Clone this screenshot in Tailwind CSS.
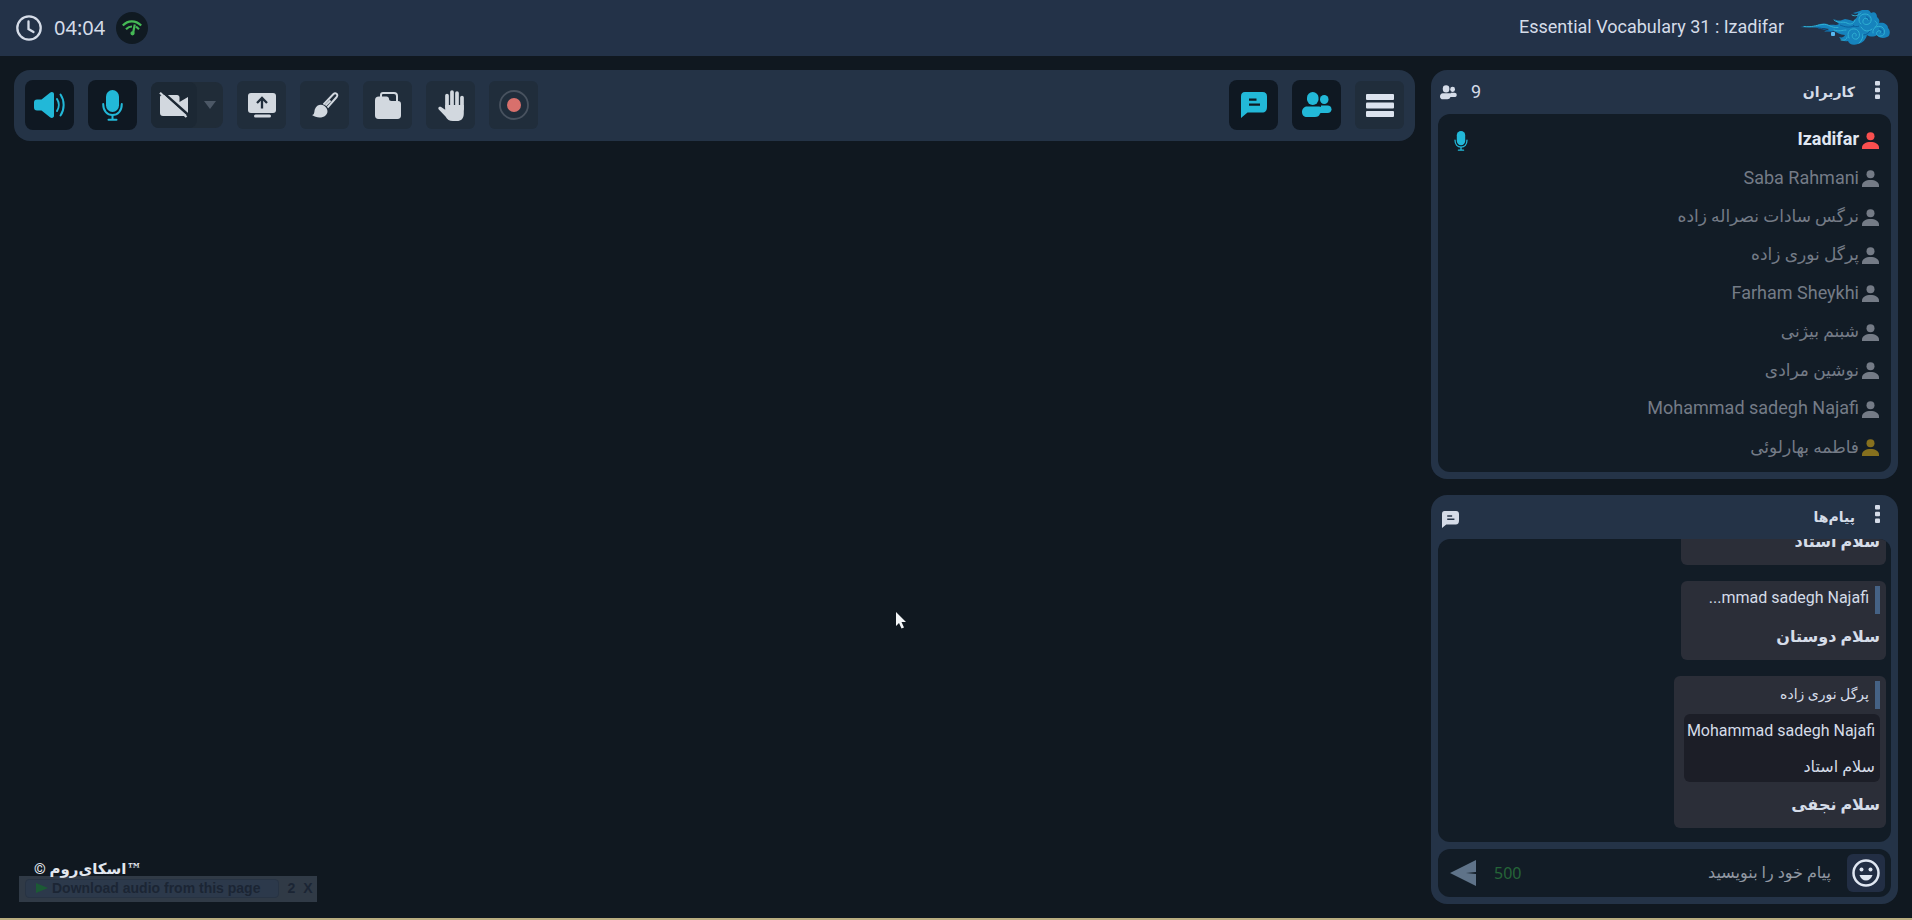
<!DOCTYPE html>
<html lang="fa">
<head>
<meta charset="utf-8">
<title>Essential Vocabulary 31 : Izadifar</title>
<script src="https://cdn.jsdelivr.net/npm/@tailwindcss/browser@4"></script>
</head>
<body class="relative flex h-screen flex-col overflow-hidden bg-[#101820] font-['Roboto','DejaVu_Sans',sans-serif] text-[#d5dce8]">
<svg class="hidden" aria-hidden="true">
  <symbol id="person" viewBox="0 0 17 17"><circle cx="8.5" cy="4.2" r="4"/><path d="M0 17v-1.5C0 12 4 10 8.500 10S17 12 17 15.500V17z"/></symbol>
  <symbol id="people" viewBox="0 0 30 26"><rect x="5" y="0" width="11.500" height="13" rx="5.700"/><rect x="18" y="3" width="8.500" height="9" rx="4.200"/><path d="M5 14.500h12c2 0 3 .8 3.500 2.500.4 2-.5 4-2.500 4.500-.5 2.500-2.500 3.500-5 3.500H5c-3 0-5-2-5-5s2-5.500 5-5.500z"/><path d="M19 13.500h6.500c2.500 0 4 1.500 4 3.800s-1.500 3.700-4 3.700H19z"/></symbol>
  <symbol id="mic" viewBox="0 0 21 31"><rect x="4" y="0" width="13" height="22" rx="6.500"/><path d="M1.200 14c0 7 4 11 9.300 11s9.300-4 9.300-11" fill="none" stroke="currentColor" stroke-width="2" stroke-linecap="round"/><path d="M10.500 25v4.500M6.500 29.800h8" stroke="currentColor" stroke-width="2" stroke-linecap="round"/></symbol>
  <symbol id="chat" viewBox="0 0 26 26"><path fill-rule="evenodd" d="M4 0h17.500C24.500 0 26 1.500 26 4.500v10c0 4-1.500 6-5 6H6.500L0 26V4.500C0 1.500 1.200 0 4 0zM8 6.500v2.200h7.500V6.500zM8 11.500v2.200h11v-2.200z"/></symbol>
</svg>

<header class="flex h-14 shrink-0 items-center justify-between bg-[#233248] pr-[22px] pl-4">
  <div class="flex items-center">
    <svg class="size-[26px]" viewBox="0 0 26 26" fill="none" stroke="currentColor" stroke-width="2.300" stroke-linecap="round"><circle cx="13" cy="13" r="11.700"/><path d="M12.500 6.500v7.500l5 3"/></svg>
    <time class="ml-3 font-['Noto_Sans'] text-xl">04:04</time>
    <span class="ml-[11px] grid size-8 place-items-center rounded-full bg-[#101a22]">
      <svg class="h-4 w-5" viewBox="0 0 20 16" fill="none" stroke="#45b955" stroke-width="2.200"><path d="M.8 5.500C6 0 13.500 0 19.200 5.500"/><path d="M4 9.200c2-2 4-2.700 6-2.700M14 6.500l3 2.700"/><path d="M12.800 4.500 11 13.500"/><circle cx="10.500" cy="13.300" r="1" fill="#45b955"/></svg>
    </span>
  </div>
  <div class="flex items-center gap-4">
    <h1 class="pb-0.5 text-lg">Essential Vocabulary 31 : Izadifar</h1>
    <svg class="h-9 w-[90px]" viewBox="0 0 90 36">
      <path fill="#1683bd" d="M0 17c6-1 11 0 16-1 5-3 9-3 13-1 4-1 7 1 10-1l-5-5c5 3 8 1 11 0 4 1 6 1 8 2 3-2 5-5 5-8-2 1-3 1-5 0 4-1 7-2 9-3 3-1 7-1 9 3 3-2 6 0 6 4 2 2 3 3 2 6 4-1 9 1 9 5 3 3 2 8-1 9-4 2-8 1-10-2-3 2-7 2-10 0-1 4-4 8-9 9-5 2-9 0-10-3-4 1-7-1-9-4 3 1 5 0 6-2-5 0-8-3-12-4-3 1-6 0-9 1l5-3C21 17 10 18 0 17z"/>
      <g fill="none" stroke="#2fb0d3" stroke-width="1" stroke-linecap="round"><path d="M4 16.500c8 1 11-1 18-2 7-1 9 4 16 3M34 10c4 4 9 1 13 3 3 2 7 1 8-3M52 5c3 2 7 0 9-2M61 14c-4-3-2-10 4-10 5 0 8 5 5 9-3 3-8 1-7-2 0-3 4-4 5-1M73 23c-1-5 4-8 9-6 4 3 3 9-1 9-4 1-6-3-3-5 2-1 4 1 2 2M49 28c-3-5 1-10 6-9 5 1 6 8 2 10-4 1-6-3-4-5 2-2 4 0 3 2M41 30c4 1 6-1 6-3M61 17c3 5 8 5 11 2M34 20c5 2 8 0 12 0M59 33c3-2 4-6 4-9M75 11c3 2 3 4 0 6"/></g>
      <g fill="none" stroke="#0b5f9d" stroke-width="1"><path d="M18 18c7 1 9 3 15 4M40 15c5 2 9 3 14 1M63 25c3 0 6-2 7-4M59 16c-2 1-5 1-6-1M66 7c2 0 3 1 3 3M79 19c3 0 4 2 3 4"/></g>
      <rect x="31" y="22" width="4" height="4" rx="1" fill="#58b9f0"/>
    </svg>
  </div>
</header>

<main class="flex min-h-0 flex-1 gap-4 px-3.5 pt-3.5 pb-4">
  <section class="relative min-w-0 flex-1">
    <nav class="flex h-[71px] items-center justify-between rounded-2xl bg-[#243346] px-[11px] pb-px" aria-label="ابزارها">
      <div class="flex items-center gap-3.5">
        <button type="button" aria-label="صدا" class="grid h-[50px] w-[49px] place-items-center rounded-lg bg-[#0f1822] text-[#22b8d8]">
          <svg class="h-[26px] w-[31px]" viewBox="0 0 31 26" fill="currentColor"><path d="M3 7.500h4.500L16 .8c1.800-1.400 4-.5 4 1.500v21.400c0 2-2.200 2.900-4 1.500L7.500 18.500H3c-2 0-3-1.200-3-3v-5c0-1.800 1-3 3-3z"/><path d="M23 7c2.300 3.500 2.300 8.500 0 12M26.500 2.500c4.200 6 4.200 15 0 21" fill="none" stroke="currentColor" stroke-width="2" stroke-linecap="round"/></svg>
        </button>
        <button type="button" aria-label="میکروفن" class="grid h-[50px] w-[49px] place-items-center rounded-lg bg-[#0f1822] text-[#22b8d8]"><svg class="h-[31px] w-[21px]" fill="currentColor"><use href="#mic"/></svg></button>
        <div class="flex h-[46px] w-[72px] rounded-lg bg-[#202c38]">
          <button type="button" aria-label="دوربین" class="grid w-[46px] place-items-center rounded-lg bg-[#1c2834] text-[#d2d8df]">
            <svg class="h-[26px] w-[30px]" viewBox="0 0 30 26"><path fill="currentColor" d="M4 3h14c1.500 0 2.500 1 2.500 2.500V10L29 5v17.500L25 24H4c-2 0-3-1-3-3V5c0-1.200 1-2 3-2z"/><path d="M2.500 -1 30 23.500" stroke="#1c2834" stroke-width="2.500"/><path d="M1 .8 27.500 25" stroke="currentColor" stroke-width="2.200"/></svg>
          </button>
          <button type="button" aria-label="گزینه‌های دوربین" class="grid flex-1 place-items-center"><svg class="h-2 w-3" viewBox="0 0 12 8"><path fill="#4c5866" d="M0 0h12L6 8z"/></svg></button>
        </div>
        <button type="button" aria-label="اشتراک صفحه" class="grid h-12 w-[49px] place-items-center rounded-md bg-[#202d3b] text-[#d2d8df]"><svg class="h-[25px] w-7" viewBox="0 0 28 25"><rect width="28" height="20" rx="3" fill="currentColor"/><rect x="6" y="21.500" width="17" height="3" rx="1.500" fill="currentColor"/><path d="M14 15.500V5.500M9 10l5-5 5 5" fill="none" stroke="#202d3b" stroke-width="2.300"/></svg></button>
        <button type="button" aria-label="تخته" class="grid h-12 w-[49px] place-items-center rounded-md bg-[#202d3b] text-[#d2d8df]"><svg class="h-[26px] w-7" viewBox="0 0 28 26"><path fill="currentColor" d="M1 23c3-.5 2-4 3-6 1.500-4 6-5.500 9.500-3 3.500 2.500 4 7 1 9.500C11 26.500 5 26 1 23z"/><path d="M12.500 12.500 22.500 2c2-2 5 .5 3.200 3L16.500 15.500" fill="none" stroke="currentColor" stroke-width="1.900" stroke-linejoin="round"/><path d="m14.500 13.500 5-5" stroke="currentColor" stroke-width="2"/></svg></button>
        <button type="button" aria-label="فایل‌ها" class="grid h-12 w-[49px] place-items-center rounded-md bg-[#202d3b] text-[#d2d8df]"><svg class="h-[27px] w-[26px]" viewBox="0 0 26 27"><path fill="currentColor" d="M0 8.500C0 6 1.200 4.500 4 4.500h7.500c1.500 0 2.500 1 2.500 2.300C14 8.300 15 9 16.500 9H23c2 0 3 1 3 3v11.500c0 2.300-1.200 3.500-3.500 3.500h-19C1.200 27 0 25.800 0 23.500z"/><path d="M6 5V3c0-1.300.7-2 2-2h11c1.800 0 3 1 3 3v6" fill="none" stroke="currentColor" stroke-width="2"/></svg></button>
        <button type="button" aria-label="بلند کردن دست" class="grid h-12 w-[49px] place-items-center rounded-md bg-[#202d3b] text-[#d2d8df]"><svg class="h-[31px] w-[26px]" viewBox="0 0 26 31"><g stroke="currentColor" stroke-linecap="round" stroke-width="3.700"><path d="M9 17V5.500M14 17V2M19 17V3M24 19V7.500"/></g><path fill="currentColor" d="M7.200 15h18.600v8.500c0 5-2.500 7.500-7 7.500h-4c-3.500 0-5.500-1.500-7.300-4.500L.8 19.500c-1.500-2.300.9-3.500 2.700-2.300l3.700 2.500z"/></svg></button>
        <button type="button" aria-label="ضبط" class="grid h-12 w-[49px] place-items-center rounded-md bg-[#202d3b]"><svg class="size-[30px]" viewBox="0 0 30 30"><circle cx="15" cy="15" r="14" fill="none" stroke="#48525f" stroke-width="1.800"/><circle cx="15" cy="15" r="7" fill="#d8706c"/></svg></button>
      </div>
      <div class="flex items-center gap-3.5">
        <button type="button" aria-label="پیام‌ها" class="grid h-[50px] w-[49px] place-items-center rounded-lg bg-[#0f1822] text-[#22b8d8]"><svg class="size-[26px]" fill="currentColor"><use href="#chat"/></svg></button>
        <button type="button" aria-label="کاربران" class="grid h-[50px] w-[49px] place-items-center rounded-lg bg-[#0f1822] text-[#22b8d8]"><svg class="h-[26px] w-[30px]" fill="currentColor"><use href="#people"/></svg></button>
        <button type="button" aria-label="فهرست" class="grid h-12 w-[49px] place-items-center rounded-md bg-[#202d3b] text-[#dce3ee]"><svg class="h-[23px] w-7" viewBox="0 0 28 23" fill="currentColor"><rect width="28" height="6" rx="1"/><rect y="8.500" width="28" height="6" rx="1"/><rect y="17" width="28" height="6" rx="1"/></svg></button>
      </div>
    </nav>
  </section>

  <aside dir="rtl" class="flex w-[467px] shrink-0 flex-col gap-4">
    <section class="flex h-[409px] shrink-0 flex-col rounded-2xl bg-[#243347] px-[7px] pb-[7px]">
      <div class="flex h-11 shrink-0 items-center pr-[11px] pl-0.5">
        <button type="button" aria-label="گزینه‌های کاربران" class="mb-1"><svg class="h-[18px] w-[5px]" viewBox="0 0 5 18" fill="currentColor"><rect width="5" height="4.500" rx="1"/><rect y="6.700" width="5" height="4.500" rx="1"/><rect y="13.500" width="5" height="4.500" rx="1"/></svg></button>
        <h2 class="mr-5 text-sm font-bold">کاربران</h2>
        <span class="mr-auto text-lg">9</span>
        <svg class="mr-3.5 h-[15px] w-[17px]" fill="currentColor"><use href="#people"/></svg>
      </div>
      <ul class="flex flex-1 flex-col rounded-xl bg-[#121c26] pt-1.5 pr-3 pb-1.5 pl-4 text-lg text-[#747b86]">
        <li class="flex flex-1 items-center gap-[3px] text-[#e0e7f2]"><svg class="mt-0.5 size-[17px] text-[#f94f4f]" fill="currentColor"><use href="#person"/></svg><span class="font-bold">Izadifar</span><svg class="mt-1 mr-auto h-5 w-3.5 text-[#22b8d8]" fill="currentColor"><use href="#mic"/></svg></li>
        <li class="flex flex-1 items-center gap-[3px]"><svg class="mt-0.5 size-[17px]" fill="currentColor"><use href="#person"/></svg><span>Saba Rahmani</span></li>
        <li class="flex flex-1 items-center gap-[3px]"><svg class="mt-0.5 size-[17px]" fill="currentColor"><use href="#person"/></svg><span class="text-[17px]">نرگس سادات نصراله زاده</span></li>
        <li class="flex flex-1 items-center gap-[3px]"><svg class="mt-0.5 size-[17px]" fill="currentColor"><use href="#person"/></svg><span class="text-[17px]">پرگل نوری زاده</span></li>
        <li class="flex flex-1 items-center gap-[3px]"><svg class="mt-0.5 size-[17px]" fill="currentColor"><use href="#person"/></svg><span>Farham Sheykhi</span></li>
        <li class="flex flex-1 items-center gap-[3px]"><svg class="mt-0.5 size-[17px]" fill="currentColor"><use href="#person"/></svg><span class="text-[17px]">شبنم بیژنی</span></li>
        <li class="flex flex-1 items-center gap-[3px]"><svg class="mt-0.5 size-[17px]" fill="currentColor"><use href="#person"/></svg><span class="text-[17px]">نوشین مرادی</span></li>
        <li class="flex flex-1 items-center gap-[3px]"><svg class="mt-0.5 size-[17px]" fill="currentColor"><use href="#person"/></svg><span>Mohammad sadegh Najafi</span></li>
        <li class="flex flex-1 items-center gap-[3px]"><svg class="mt-0.5 size-[17px] text-[#86701e]" fill="currentColor"><use href="#person"/></svg><span class="text-[17px]">فاطمه بهارلوئی</span></li>
      </ul>
    </section>

    <section class="flex min-h-0 flex-1 flex-col rounded-2xl bg-[#243347] px-[7px] pb-[7px]">
      <div class="flex h-11 shrink-0 items-center pr-[11px] pl-1">
        <button type="button" aria-label="گزینه‌های پیام‌ها" class="mb-1.5"><svg class="h-[18px] w-[5px]" viewBox="0 0 5 18" fill="currentColor"><rect width="5" height="4.500" rx="1"/><rect y="6.700" width="5" height="4.500" rx="1"/><rect y="13.500" width="5" height="4.500" rx="1"/></svg></button>
        <h2 class="mr-5 text-sm font-bold">پیام‌ها</h2>
        <svg class="mt-1 mr-auto size-[17px]" fill="currentColor"><use href="#chat"/></svg>
      </div>
      <div class="flex min-h-0 flex-1 flex-col items-start justify-end gap-4 overflow-hidden rounded-xl bg-[#121c26] pr-[5px] pb-3.5">
        <article class="w-[205px] shrink-0 rounded-md bg-[#2b2e38] px-1.5 pb-1.5">
          <p class="flex h-10 items-center pt-1.5 text-base font-bold">سلام استاد</p>
        </article>
        <article class="w-[205px] shrink-0 rounded-md bg-[#2b2e38] px-1.5 pt-[5px] pb-1.5">
          <p class="flex h-7 items-center border-r-[5px] border-[#456285] pr-1.5 pb-1 text-base"><span dir="ltr">...mmad sadegh Najafi</span></p>
          <p class="flex h-10 items-center pt-1.5 text-base font-bold">سلام دوستان</p>
        </article>
        <article class="w-[212px] shrink-0 rounded-md bg-[#2b2e38] px-1.5 pt-[5px] pb-1.5">
          <p class="flex h-7 items-center border-r-[5px] border-[#456285] pr-1.5 pb-0.5 text-sm">پرگل نوری زاده</p>
          <blockquote class="mt-[5px] ml-1 rounded-md bg-[#1c1e27] pr-[5px]">
            <p class="flex h-[34px] items-center whitespace-nowrap text-base">Mohammad sadegh Najafi</p>
            <p class="flex h-[34px] items-center pt-1 text-base">سلام استاد</p>
          </blockquote>
          <p class="flex h-10 items-center pt-1.5 text-base font-bold">سلام نجفی</p>
        </article>
      </div>
      <form class="mt-[7px] flex h-12 shrink-0 items-center rounded-xl bg-[#121c26] pr-1.5 pl-3">
        <button type="button" aria-label="شکلک" class="grid size-[38px] shrink-0 place-items-center rounded-md bg-[#222e44] text-[#e0e7f2]"><svg class="size-7" viewBox="0 0 28 28"><circle cx="14" cy="14" r="12.500" fill="none" stroke="currentColor" stroke-width="2.500"/><g fill="currentColor"><circle cx="9.500" cy="10.500" r="2"/><circle cx="18.500" cy="10.500" r="2"/><path d="M7.500 16h13c-1 3.500-3.500 5.500-6.500 5.500S8.500 19.500 7.500 16z"/></g></svg></button>
        <input type="text" aria-label="پیام" placeholder="پیام خود را بنویسید" class="mr-4 min-w-0 flex-1 bg-transparent text-base outline-none placeholder:text-[#9198a2]">
        <span class="font-['Noto_Sans'] text-base text-[#256438]">500</span>
        <button type="button" aria-label="ارسال" class="mr-[18px]"><svg class="h-[26px] w-[26px]" viewBox="0 0 26 26"><path fill="#5f7389" d="M0 13 26 0v12l-10 1 10 1v12z"/></svg></button>
      </form>
    </section>
  </aside>
</main>

<div class="absolute bottom-[18px] left-[19px] flex h-[26px] items-center gap-2 bg-[#303a46] pr-1 pb-0.5 pl-1.5 font-['Liberation_Sans'] text-sm font-bold text-[#1b2534]">
  <button type="button" class="flex h-[19px] items-center gap-1 rounded-sm border border-[#273343] bg-[#2c394b] pr-[18px] pl-2.5 whitespace-nowrap"><svg class="h-2.5 w-3" viewBox="0 0 12 10"><path fill="#1c5a35" d="M0 0 12 5 0 10z"/></svg>Download audio from this page</button>
  <button type="button">2</button>
  <button type="button">X</button>
</div>
<a href="#" dir="rtl" class="absolute bottom-10 left-[34px] text-[15px] font-bold whitespace-nowrap text-[#e2e7ee]"><span class="font-['DejaVu_Serif']">™</span>اسکای‌روم ©</a>
<svg class="absolute top-[612px] left-[896px] h-[18px] w-3" viewBox="0 0 12 18"><path fill="#f4f6f8" d="M0 0v14l3-3 2.500 5.500 2.500-1L5.500 10H10z"/></svg>
<div class="absolute inset-x-0 bottom-0 h-0.5 bg-[#b9ad80]"></div>
</body>
</html>
